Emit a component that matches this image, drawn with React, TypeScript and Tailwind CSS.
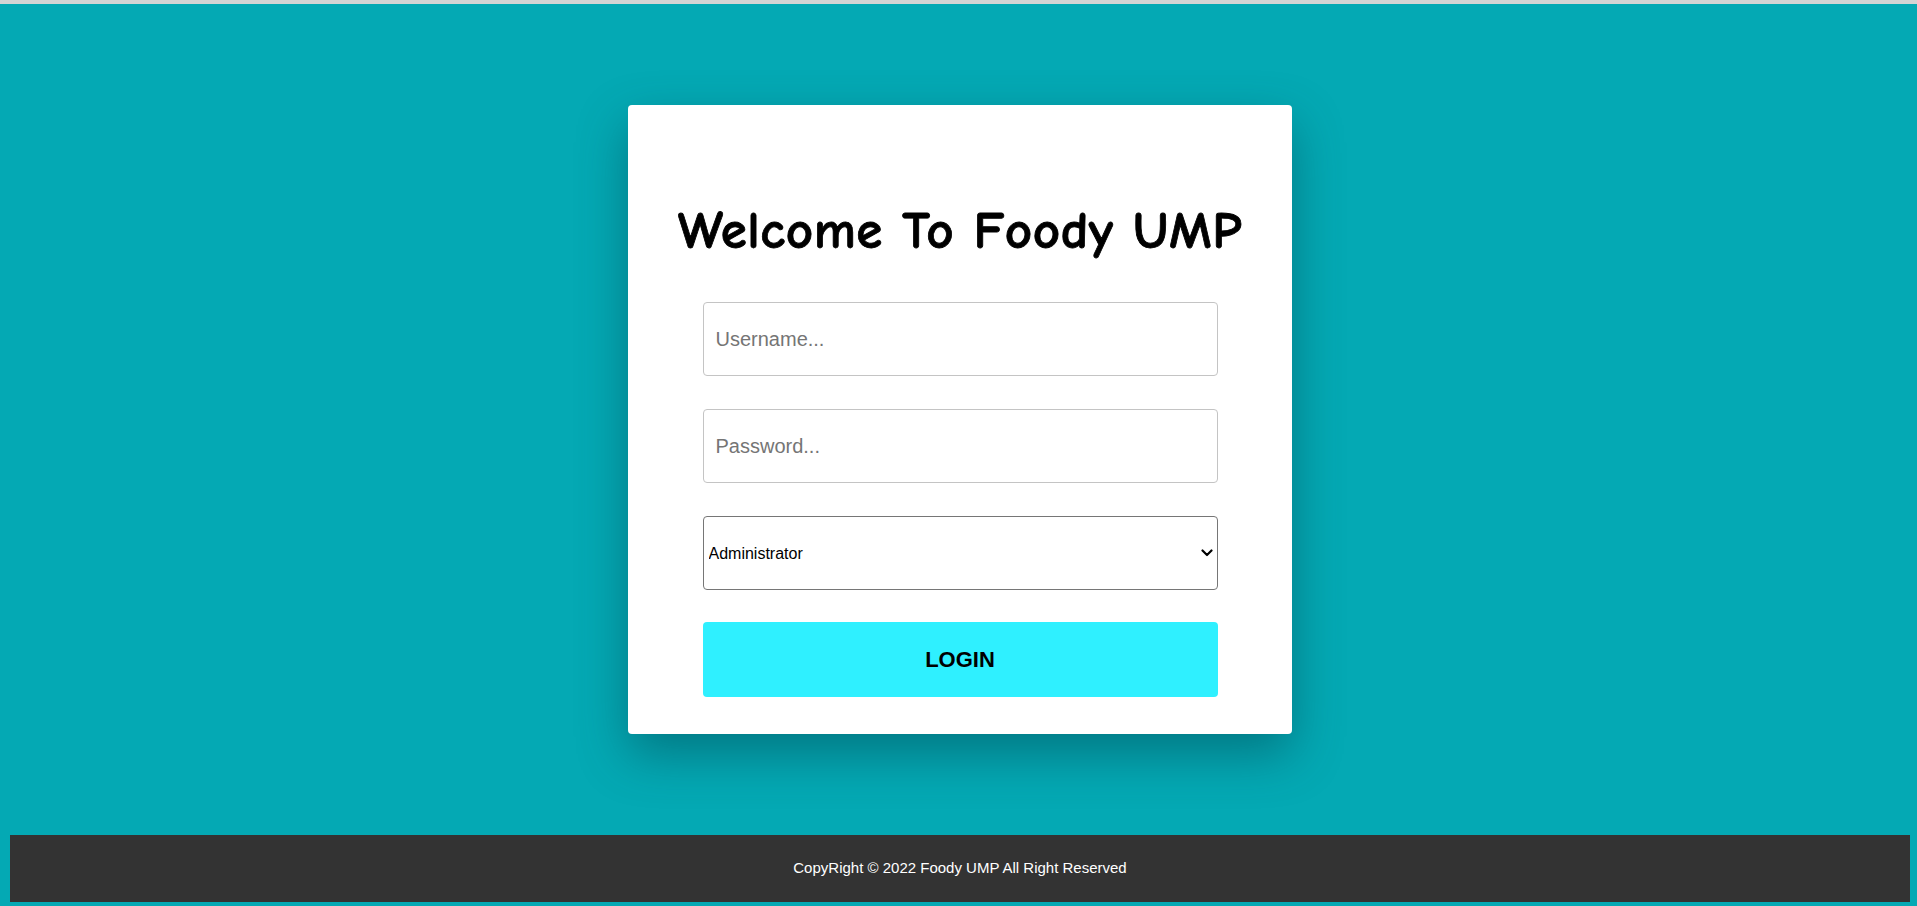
import React from "react";

const App: React.FC = () => {
  return (
    <div className="flex min-h-screen flex-col border-t-4 border-[#d4d4d4] bg-[#04a9b4] font-['Liberation_Sans',Arial,sans-serif]">
      <main className="flex flex-1 justify-center pl-[3px] pt-[101px]">
        <div className="h-[629px] w-[664px] rounded-[4px] bg-white pt-[98px] shadow-[0_20px_50px_rgba(0,60,70,0.45)]">
          <h1 className="whitespace-nowrap text-center font-['Comic_Sans_MS','Comic_Neue','DejaVu_Sans',cursive] text-[53px] font-bold leading-[56px] tracking-[0.5px] text-black [-webkit-text-stroke:0.8px_black]">
            Welcome To Foody UMP
          </h1>

          <form className="mx-auto mt-[43px] flex w-[515px] flex-col gap-[33px]">
            <input
              type="text"
              placeholder="Username..."
              className="h-[74px] w-full rounded-[4px] border border-[#c4c4c4] px-[12px] text-[20px] text-black placeholder:text-[#757575] outline-none"
            />
            <input
              type="password"
              placeholder="Password..."
              className="h-[74px] w-full rounded-[4px] border border-[#c4c4c4] px-[12px] text-[20px] text-black placeholder:text-[#757575] outline-none"
            />
            <div className="relative">
              <select
                defaultValue="admin"
                className="h-[74px] w-full appearance-none rounded-[4px] border border-[#767676] bg-white pl-[5px] pt-[1px] text-[16px] text-black"
              >
                <option value="admin">Administrator</option>
                <option value="staff">Staff</option>
                <option value="customer">Customer</option>
              </select>
              <svg
                viewBox="0 0 12 8"
                className="pointer-events-none absolute right-[5px] top-1/2 h-[8px] w-[12px] -translate-y-1/2"
                fill="none"
                stroke="black"
                strokeWidth="2.2"
                strokeLinecap="round"
                strokeLinejoin="round"
              >
                <path d="M1.5 1.5 6 6l4.5-4.5" />
              </svg>
            </div>
            <button
              type="button"
              className="-mt-[1px] h-[75px] w-full rounded-[4px] bg-[#2ff0ff] text-[22px] font-bold text-black"
            >
              LOGIN
            </button>
          </form>
        </div>
      </main>

      <footer className="mb-[4px] ml-[10px] mt-[100px] flex h-[67px] w-[1900px] items-center justify-center bg-[#333333]">
        <p className="text-[15px] text-white">CopyRight © 2022 Foody UMP All Right Reserved</p>
      </footer>
    </div>
  );
};

export default App;
